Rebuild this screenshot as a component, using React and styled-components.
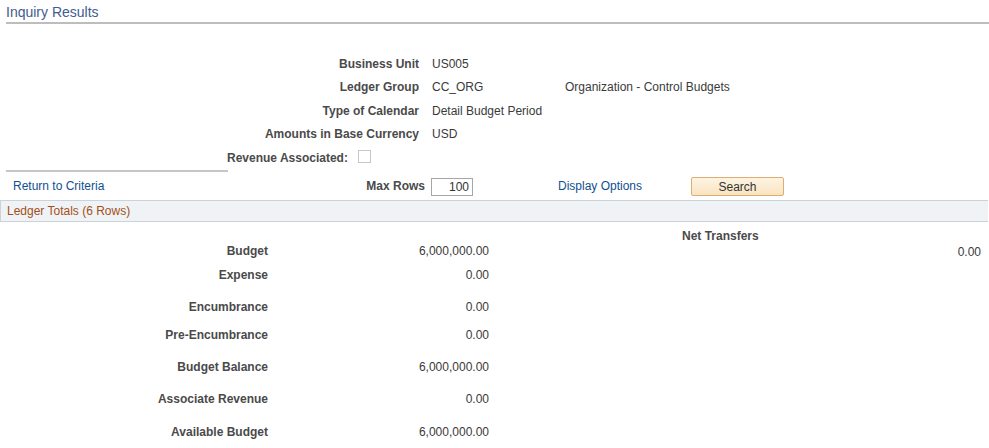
import { Fragment } from "react";
import styled, { createGlobalStyle } from "styled-components";

const GlobalStyle = createGlobalStyle`
    body {
        margin: 0;
        background: #ffffff;
        font-family: "Liberation Sans", Arial, sans-serif;
        font-size: 12px;
        color: #333333;
    }
`;

const Page = styled.div`
    width: 989px;
    height: 448px;
    overflow: hidden;
`;

const TitleBar = styled.div`
    margin-left: 6px;
    padding-top: 3px;
    height: 19px;
    border-bottom: 2px solid #bdbdbd;
`;

const Title = styled.h1`
    margin: 0;
    font-size: 14px;
    font-weight: normal;
    line-height: 18px;
    color: #3f5d8e;
`;

const Fields = styled.div`
    margin-top: 28px;
    display: grid;
    grid-template-columns: 419px 120px auto;
    column-gap: 13px;
    grid-auto-rows: 23.5px;
    align-items: center;
`;

const Label = styled.span`
    font-weight: bold;
    color: #4a4a4a;
    text-align: ${(p) => p.$align || "right"};
    white-space: nowrap;
`;

const Value = styled.span`
    color: #3a3a3a;
    white-space: nowrap;
`;

const CheckRow = styled.div`
    height: 23.5px;
    display: flex;
    align-items: center;
    padding-left: 227px;
    gap: 10px;
`;

const Checkbox = styled.span`
    width: 11px;
    height: 11px;
    border: 1px solid #c8c8c0;
    background: #ffffff;
    margin-top: -2px;
`;

const Divider = styled.div`
    margin-left: 6px;
    width: 222px;
    border-top: 2px solid #c6c6c6;
`;

const ActionRow = styled.div`
    display: flex;
    align-items: center;
    height: 28px;
    padding-left: 13px;
`;

const LeftCell = styled.div`
    width: 412px;
    display: flex;
    align-items: center;
    justify-content: space-between;
`;

const Link = styled.a`
    color: #114f8f;
    text-decoration: none;
    cursor: pointer;
    white-space: nowrap;
`;

const NumberInput = styled.div`
    margin-left: 6px;
    width: 34px;
    height: 16px;
    border: 1px solid #a6a6a6;
    padding: 0 3px;
    text-align: right;
    line-height: 17px;
    color: #333333;
    margin-top: 2px;
`;

const LinkCell = styled.div`
    margin-left: 85px;
    width: 133px;
`;

const Button = styled.button`
    width: 93px;
    height: 19px;
    margin-top: 2px;
    padding: 0;
    font-family: "Liberation Sans", Arial, sans-serif;
    font-size: 12px;
    color: #333333;
    background: linear-gradient(#fdf4e3, #f9e4c0);
    border: 1px solid #e0ac72;
    border-radius: 2px;
`;

const SectionBar = styled.div`
    height: 20px;
    border: 1px solid #cdd2d6;
    border-right: none;
    background: #eff3f5;
    display: flex;
    align-items: center;
    padding-left: 6px;
    margin-right: 1px;
    color: #a34f1a;
`;

const Totals = styled.div`
    display: flex;
    align-items: flex-start;
`;

const LeftTotals = styled.div`
    width: 489px;
    padding-top: 21px;
`;

const TotalRow = styled.div`
    display: grid;
    grid-template-columns: 268px 1fr;
    line-height: 16px;
    margin-top: ${(p) => p.$space}px;
`;

const RightTotals = styled.div`
    width: 492px;
    padding-top: 6px;
    padding-left: 193px;
    box-sizing: border-box;
    line-height: 16px;
    display: flex;
    flex-direction: column;
`;

const Amount = styled(Value)`
    text-align: right;
`;

const fields = [
    { label: "Business Unit", value: "US005" },
    { label: "Ledger Group", value: "CC_ORG", extra: "Organization - Control Budgets" },
    { label: "Type of Calendar", value: "Detail Budget Period" },
    { label: "Amounts in Base Currency", value: "USD" },
];

const totals = [
    { label: "Budget", amount: "6,000,000.00", space: 0 },
    { label: "Expense", amount: "0.00", space: 8 },
    { label: "Encumbrance", amount: "0.00", space: 16 },
    { label: "Pre-Encumbrance", amount: "0.00", space: 12 },
    { label: "Budget Balance", amount: "6,000,000.00", space: 16 },
    { label: "Associate Revenue", amount: "0.00", space: 16 },
    { label: "Available Budget", amount: "6,000,000.00", space: 17 },
];

export default function App() {
    return (
        <Page>
            <GlobalStyle />
            <TitleBar>
                <Title>Inquiry Results</Title>
            </TitleBar>

            <Fields>
                {fields.map((f) => (
                    <Fragment key={f.label}>
                        <Label>{f.label}</Label>
                        <Value>{f.value}</Value>
                        <Value>{f.extra || ""}</Value>
                    </Fragment>
                ))}
            </Fields>
            <CheckRow>
                <Label>Revenue Associated:</Label>
                <Checkbox />
            </CheckRow>
            <Divider />

            <ActionRow>
                <LeftCell>
                    <Link>Return to Criteria</Link>
                    <Label>Max Rows</Label>
                </LeftCell>
                <NumberInput>100</NumberInput>
                <LinkCell>
                    <Link>Display Options</Link>
                </LinkCell>
                <Button>Search</Button>
            </ActionRow>

            <SectionBar>Ledger Totals (6 Rows)</SectionBar>

            <Totals>
                <LeftTotals>
                    {totals.map((t) => (
                        <TotalRow key={t.label} $space={t.space}>
                            <Label>{t.label}</Label>
                            <Amount>{t.amount}</Amount>
                        </TotalRow>
                    ))}
                </LeftTotals>
                <RightTotals>
                    <Label $align="left">Net Transfers</Label>
                    <Amount>0.00</Amount>
                </RightTotals>
            </Totals>
        </Page>
    );
}
